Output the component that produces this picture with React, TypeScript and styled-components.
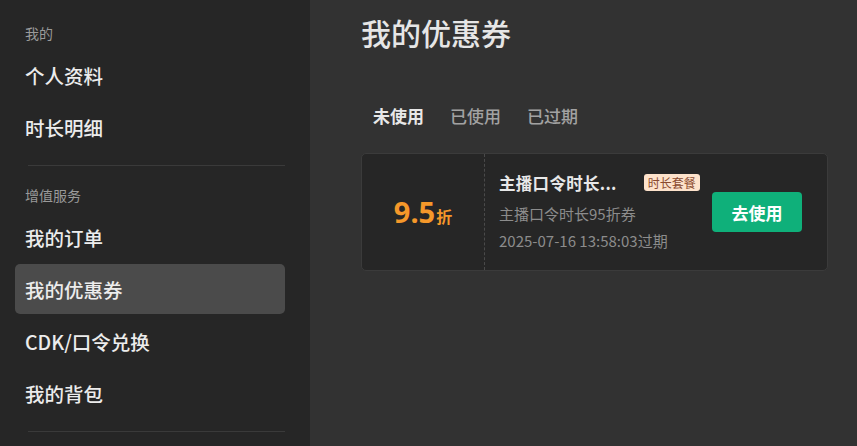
import React, { useState } from "react";
import styled, { createGlobalStyle } from "styled-components";

const GlobalStyle = createGlobalStyle`
  html, body {
    margin: 0;
    padding: 0;
    height: 100%;
    background: #323232;
    font-family: "Noto Sans CJK SC", "Noto Sans", sans-serif;
  }
  #root { height: 100%; }
`;

type NavItem = { label: string; active?: boolean };
type NavGroup = { title: string; items: NavItem[] };

const groups: NavGroup[] = [
  { title: "我的", items: [{ label: "个人资料" }, { label: "时长明细" }] },
  {
    title: "增值服务",
    items: [
      { label: "我的订单" },
      { label: "我的优惠券", active: true },
      { label: "CDK/口令兑换" },
      { label: "我的背包" },
    ],
  },
];

const tabs = ["未使用", "已使用", "已过期"];

// long names are cut to 6 chars like the client does
const shorten = (s: string, n = 6) => (s.length > n ? s.slice(0, n) + "..." : s);

export default function App() {
  const [tab, setTab] = useState(0);

  return (
    <>
      <GlobalStyle />
      <Layout>
        <Sidebar>
          {groups.map((g) => (
            <Group key={g.title}>
              <GroupTitle>{g.title}</GroupTitle>
              <ItemList>
                {g.items.map((it) => (
                  <Item key={it.label} $active={it.active}>
                    {it.label}
                  </Item>
                ))}
              </ItemList>
              <Divider />
            </Group>
          ))}
        </Sidebar>

        <Main>
          <PageTitle>我的优惠券</PageTitle>
          <Tabs>
            {tabs.map((t, i) => (
              <Tab key={t} $active={i === tab} onClick={() => setTab(i)}>
                {t}
              </Tab>
            ))}
          </Tabs>

          <Coupon>
            <Discount>
              <Value>9.5</Value>
              <Unit>折</Unit>
            </Discount>
            <Info>
              <TitleRow>
                <CouponName>{shorten("主播口令时长95折券")}</CouponName>
                <Tag>时长套餐</Tag>
              </TitleRow>
              <Desc>主播口令时长95折券</Desc>
              <Desc>2025-07-16 13:58:03过期</Desc>
            </Info>
            <UseButton>去使用</UseButton>
          </Coupon>
        </Main>
      </Layout>
    </>
  );
}

const Layout = styled.div`
  display: flex;
  height: 100vh;
  overflow: hidden;
`;

const Sidebar = styled.aside`
  width: 310px;
  flex-shrink: 0;
  background: #262626;
  padding: 23px 25px 0 15px;
  box-sizing: border-box;
`;

const Group = styled.div`
  display: flex;
  flex-direction: column;
`;

const GroupTitle = styled.div`
  padding-left: 10px;
  font-size: 14px;
  line-height: 20px;
  color: #9a9a9a;
  margin-bottom: 7px;
`;

const ItemList = styled.div`
  display: flex;
  flex-direction: column;
  gap: 2px;
`;

const Item = styled.div<{ $active?: boolean }>`
  height: 50px;
  display: flex;
  align-items: center;
  padding-left: 10px;
  border-radius: 5px;
  font-size: 19.5px;
  font-weight: 500;
  color: #ececec;
  background: ${(p) => (p.$active ? "#4b4b4b" : "transparent")};
  cursor: pointer;
`;

const Divider = styled.div`
  height: 1px;
  background: #3a3a3a;
  margin: 13px 0 19px 13px;
`;

const Main = styled.main`
  flex: 1;
  padding: 11px 29px 0 51px;
  display: flex;
  flex-direction: column;
`;

const PageTitle = styled.h1`
  margin: 0;
  font-size: 30px;
  line-height: 43px;
  font-weight: 500;
  color: #e6e6e6;
`;

const Tabs = styled.div`
  display: flex;
  gap: 26px;
  padding-left: 12px;
  margin-top: 50px;
`;

const Tab = styled.div<{ $active?: boolean }>`
  font-size: 17px;
  line-height: 24px;
  font-weight: ${(p) => (p.$active ? 700 : 500)};
  color: ${(p) => (p.$active ? "#e8e8e8" : "#a2a2a2")};
  cursor: pointer;
`;

const Coupon = styled.div`
  margin-top: 25px;
  height: 118px;
  box-sizing: border-box;
  display: flex;
  align-items: center;
  background: #262626;
  border: 1px solid #3b3b3b;
  border-radius: 5px;
  padding-right: 25px;
`;

const Discount = styled.div`
  width: 123px;
  align-self: stretch;
  display: flex;
  align-items: baseline;
  justify-content: center;
  padding-top: 38px;
  box-sizing: border-box;
  border-right: 1px dashed #4a4a4a;
  color: #f5982a;
  font-family: "Noto Sans", "Noto Sans CJK SC", sans-serif;
`;

const Value = styled.span`
  font-size: 29px;
  font-weight: 700;
  line-height: 40px;
`;

const Unit = styled.span`
  font-size: 16px;
  font-weight: 700;
  font-family: "Noto Sans CJK SC", sans-serif;
  margin-left: 1px;
`;

const Info = styled.div`
  flex: 1;
  padding-left: 14px;
  display: flex;
  flex-direction: column;
`;

const TitleRow = styled.div`
  display: flex;
  align-items: center;
  gap: 27px;
  margin-bottom: 5px;
`;

const CouponName = styled.div`
  white-space: nowrap;
  font-size: 16.5px;
  line-height: 24px;
  font-weight: 700;
  color: #e8e8e8;
  letter-spacing: 0.3px;
`;

const Tag = styled.span`
  height: 17px;
  padding: 0 4px;
  display: inline-flex;
  align-items: center;
  border-radius: 3px;
  background: #fde2cb;
  color: #8a4a2e;
  font-size: 12px;
`;

const Desc = styled.div`
  font-size: 15px;
  line-height: 27px;
  color: #8c8c8c;
`;

const UseButton = styled.button`
  width: 90px;
  height: 40px;
  border: none;
  border-radius: 4px;
  background: #0fb07a;
  color: #ffffff;
  font-family: "Noto Sans CJK SC", sans-serif;
  font-size: 17px;
  font-weight: 600;
  cursor: pointer;
`;
